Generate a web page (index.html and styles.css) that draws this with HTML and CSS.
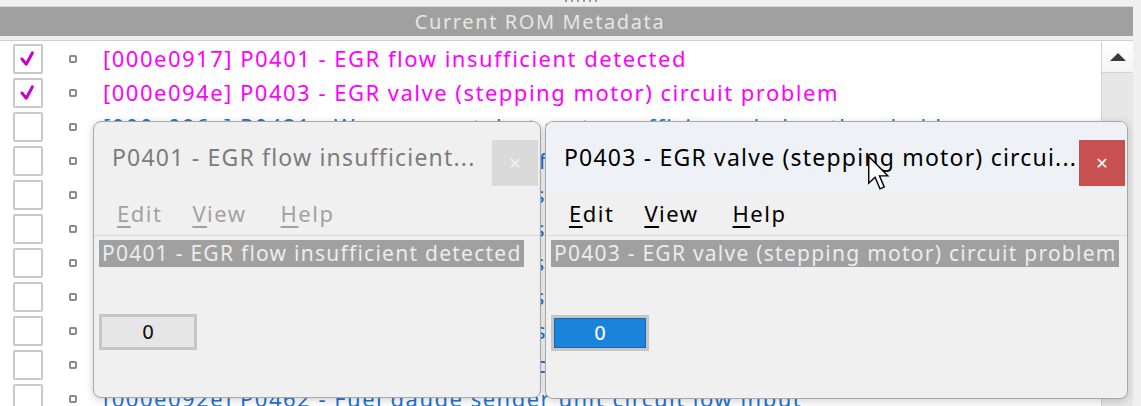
FILE: index.html
```html
<!DOCTYPE html>
<html>
<head>
<meta charset="utf-8">
<link rel="stylesheet" href="styles.css">
</head>
<body>
<div class="app">
  <div class="grip"><span class="dots"></span></div>
  <div class="header">Current ROM Metadata</div>
  <div class="listwrap">
    <div class="list">
      <div class="row"><span class="cb"><svg viewBox="0 0 30 30" width="26" height="26"><path d="M8 15 L13 21 L20 8" fill="none" stroke="#c800c8" stroke-width="3.5" stroke-linecap="round" stroke-linejoin="round"/></svg></span><span class="bullet"></span><span class="txt pink">[000e0917] P0401 - EGR flow insufficient detected</span></div>
      <div class="row"><span class="cb"><svg viewBox="0 0 30 30" width="26" height="26"><path d="M8 15 L13 21 L20 8" fill="none" stroke="#c800c8" stroke-width="3.5" stroke-linecap="round" stroke-linejoin="round"/></svg></span><span class="bullet"></span><span class="txt pink">[000e094e] P0403 - EGR valve (stepping motor) circuit problem</span></div>
      <div class="row"><span class="cb"></span><span class="bullet"></span><span class="txt blue">[000e096a] P0421 - Warm up catalyst system efficiency below threshold</span></div>
      <div class="row"><span class="cb"></span><span class="bullet"></span><span class="txt blue">[000e0980] P0420 - Catalyst system efficiency below threshold</span></div>
      <div class="row"><span class="cb"></span><span class="bullet"></span><span class="txt blue">[000e0985] P0441 - Evaporative emission control system incorrect purge flow</span></div>
      <div class="row"><span class="cb"></span><span class="bullet"></span><span class="txt blue">[000e0990] P0442 - Evaporative emission control system small leak detected</span></div>
      <div class="row"><span class="cb"></span><span class="bullet"></span><span class="txt blue">[000e099a] P0443 - Evaporative emission purge control valve circuit</span></div>
      <div class="row"><span class="cb"></span><span class="bullet"></span><span class="txt blue">[000e09a4] P0446 - Evaporative emission vent control circuit</span></div>
      <div class="row"><span class="cb"></span><span class="bullet"></span><span class="txt blue">[000e09b0] P0451 - Evaporative emission pressure sensor range</span></div>
      <div class="row"><span class="cb"></span><span class="bullet"></span><span class="txt blue">[000e09c2] P0461 - Fuel level sensor circuit range/performance</span></div>
      <div class="row"><span class="cb"></span><span class="bullet"></span><span class="txt blue">[000e092e] P0462 - Fuel gauge sender unit circuit low input</span></div>
    </div>
    <div class="scroll">
      <div class="up"><span class="tri"></span></div>
      <div class="track"></div>
    </div>
  </div>

  <div class="win win-left inactive">
    <div class="titlebar">
      <span class="title">P0401 - EGR flow insufficient...</span>
      <span class="close">&#x2715;</span>
    </div>
    <div class="menubar">
      <span class="mi"><u>E</u>dit</span><span class="mi"><u>V</u>iew</span><span class="mi mi-help"><u>H</u>elp</span>
    </div>
    <div class="content">
      <div class="label">P0401 - EGR flow insufficient detected</div>
      <div class="btn">0</div>
    </div>
  </div>

  <div class="win win-right active">
    <div class="titlebar">
      <span class="title">P0403 - EGR valve (stepping motor) circui...</span>
      <span class="close">&#x2715;</span>
    </div>
    <div class="menubar">
      <span class="mi"><u>E</u>dit</span><span class="mi"><u>V</u>iew</span><span class="mi mi-help"><u>H</u>elp</span>
    </div>
    <div class="content">
      <div class="label">P0403 - EGR valve (stepping motor) circuit problem</div>
      <div class="btn btn-blue">0</div>
    </div>
  </div>

  <svg class="cursor" width="26" height="38" viewBox="0 0 18 27"><path d="M1 1 L1 20 L5.5 15.8 L9 24 L12 22.7 L8.6 14.8 L14.5 14.8 Z" fill="#fff" stroke="#000" stroke-width="1" stroke-linejoin="miter"/></svg>
</div>
</body>
</html>
```
FILE: styles.css
```css
html, body {
  margin: 0;
  padding: 0;
  background: #f0f0f0;
  overflow: hidden;
}
.app {
  position: relative;
  width: 1141px;
  height: 406px;
  overflow: hidden;
  font-family: "Noto Sans", "Open Sans", sans-serif;
}
.grip {
  height: 6px;
  display: flex;
  justify-content: center;
  border-bottom: 1px solid #d6d6d6;
  margin-right: 8px;
}
.dots {
  width: 34px;
  height: 2px;
  margin-left: 30px;
  background: repeating-linear-gradient(90deg, #9a9a9a 0 2px, transparent 2px 6px);
}
.header {
  height: 29px;
  margin-right: 8px;
  padding-right: 53px;
  background: #a0a0a0;
  color: #e6e6e6;
  font-size: 20px;
  line-height: 29px;
  text-align: center;
  letter-spacing: 1.6px;
}
.listwrap {
  margin-top: 4px;
  margin-right: 8px;
  border-top: 1px solid #cfcfcf;
  height: 370px;
  display: flex;
  background: #fff;
  padding-top: 1px;
}
.list {
  flex: 1;
  padding-left: 13px;
  padding-top: 0;
}
.row {
  height: 34px;
  display: flex;
  align-items: center;
}
.cb {
  width: 26px;
  height: 26px;
  border: 2px solid #c9c9c9;
  border-radius: 2px;
  background: #fff;
  display: flex;
  align-items: center;
  justify-content: center;
  box-sizing: content-box;
}
.bullet {
  width: 4px;
  height: 4px;
  border: 2px solid #8a8a8a;
  border-radius: 2px;
  margin-left: 26px;
}
.txt {
  margin-left: 26px;
  font-size: 22px;
  letter-spacing: 1.5px;
  white-space: nowrap;
  position: relative;
  top: -1px;
}
.pink { color: #ff00ff; }
.blue { color: #2172d8; }
.scroll {
  width: 31px;
  border-left: 1px solid #d2d2d2;
  display: flex;
  flex-direction: column;
  background: #e7e7e7;
}
.up {
  height: 30px;
  background: linear-gradient(#ffffff, #f4f4f4);
  border-bottom: 1px solid #d4d4d4;
  display: flex;
  align-items: center;
  justify-content: center;
}
.tri {
  width: 0;
  height: 0;
  border-left: 8px solid transparent;
  border-right: 8px solid transparent;
  border-bottom: 8px solid #3a3a3a;
}
.track { flex: 1; }

/* floating windows */
.win {
  position: absolute;
  top: 121px;
  background: #f0f0f0;
  border: 1px solid #a8a8a8;
  border-radius: 8px;
  box-shadow: 0 2px 8px rgba(0,0,0,0.18);
  overflow: hidden;
  display: flex;
  flex-direction: column;
}
.win-left { left: 93px; width: 446px; height: 275px; }
.win-right { left: 545px; width: 581px; height: 276px; }
.titlebar {
  height: 70px;
  display: flex;
  align-items: flex-start;
  justify-content: space-between;
  padding-left: 18px;
  padding-right: 2px;
}
.active .titlebar { background: #eef2f7; }
.title {
  font-size: 23px;
  letter-spacing: 1.2px;
  line-height: 28px;
  margin-top: 21px;
  white-space: nowrap;
}
.inactive .title { color: #7c7c7c; }
.active .title { color: #000; }
.close {
  width: 46px;
  height: 46px;
  margin-top: 18px;
  display: flex;
  align-items: center;
  justify-content: center;
  font-size: 16px;
  font-family: "DejaVu Sans", sans-serif;
  font-weight: bold;
}
.inactive .close { background: #dadada; color: #f2f2f2; font-weight: normal; }
.active .close { background: #c75050; color: #fff; }
.menubar {
  height: 43px;
  border-bottom: 1px solid #d9d9d9;
  display: flex;
  align-items: center;
  padding-left: 23px;
  gap: 30px;
}
.mi {
  font-size: 22px;
  letter-spacing: 1.5px;
  line-height: 28px;
  position: relative;
  top: -1px;
}
.mi-help { margin-left: 4px; }
.mi u { text-decoration-thickness: 2px; text-underline-offset: 4px; }
.inactive .mi { color: #a2a2a2; }
.active .mi { color: #000; }
.content {
  flex: 1;
  padding: 4px 5px 0;
  display: flex;
  flex-direction: column;
  align-items: flex-start;
}
.label {
  background: #a0a0a0;
  color: #ececec;
  font-size: 21px;
  letter-spacing: 1.25px;
  line-height: 27px;
  padding: 0 2px 0 3px;
  white-space: nowrap;
}
.btn {
  margin-top: 47px;
  width: 92px;
  height: 30px;
  border: 3px solid #c6c6c6;
  background: #e6e6e6;
  color: #111;
  font-size: 19px;
  line-height: 30px;
  text-align: center;
  font-family: "DejaVu Sans", sans-serif;
}
.win-right .btn { margin-top: 48px; }
.btn-blue {
  background: #1a84dc;
  color: #fff;
  box-shadow: inset 0 0 0 1px #1666b5;
}
.cursor {
  position: absolute;
  left: 867px;
  top: 155px;
}
```
